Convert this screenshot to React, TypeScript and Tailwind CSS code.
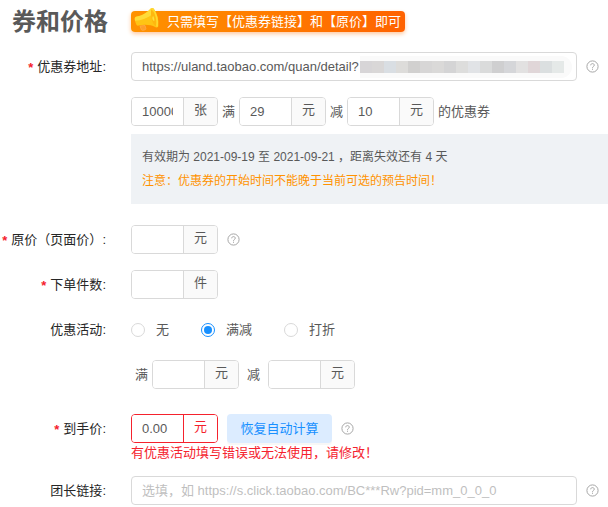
import { useState } from 'react';
import type { ReactNode } from 'react';

type RowProps = {
  label?: string;
  htmlFor?: string;
  required?: boolean;
  className?: string;
  children: ReactNode;
};

const Row = ({ label, htmlFor, required, className = '', children }: RowProps) => (
  <div className={`flex gap-[25px] ${className}`}>
    <div className="flex h-[29px] w-[106px] shrink-0 items-center justify-end whitespace-nowrap text-[#262626]">
      {required && <span className="mr-1 pt-0.5 font-bold text-[#f5222d]" aria-hidden="true">*</span>}
      {label && <label htmlFor={htmlFor}>{label}:</label>}
    </div>
    <div className="min-w-0 flex-1">{children}</div>
  </div>
);

type UnitInputProps = {
  id?: string;
  label: string;
  unit: string;
  defaultValue?: string;
  error?: boolean;
};

const UnitInput = ({ id, label, unit, defaultValue = '', error = false }: UnitInputProps) => {
  const [value, setValue] = useState(defaultValue);

  return (
    <div className={`flex h-[29px] w-[87px] shrink-0 overflow-hidden rounded border ${error ? 'border-[#f5222d]' : 'border-[#d9d9d9]'}`}>
      <input
        id={id}
        aria-label={label}
        className="w-[51px] min-w-0 bg-white px-2.5 outline-none"
        value={value}
        onChange={(e) => setValue(e.target.value)}
      />
      <span
        className={`flex flex-1 items-center justify-center border-l pb-1 ${
          error ? 'border-[#f5222d] bg-white text-[#f5222d]' : 'border-[#d9d9d9] bg-[#fafafa]'
        }`}
      >
        {unit}
      </span>
    </div>
  );
};

const HelpButton = () => (
  <button type="button" aria-label="帮助" className="shrink-0">
    <svg width="13" height="13" viewBox="0 0 13 13" fill="none" stroke="#a6a6a6">
      <circle cx="6.5" cy="6.5" r="5.6" />
      <path d="M4.7 5.3c0-1 .8-1.7 1.8-1.7s1.8.7 1.8 1.6c0 1.2-1.8 1.3-1.8 2.6" />
      <path d="M6.5 8.7v1.1" />
    </svg>
  </button>
);

const Megaphone = () => (
  <svg className="absolute -top-1 left-0.5" width="28" height="26" viewBox="0 0 28 26">
    <path d="M7 19l1.3 3.5c.3.8.9 1 1.7.8l2-.5c.8-.2 1-.8.8-1.5L12 18.5z" fill="#ff9d2a" stroke="#ffab4a" strokeWidth=".8" />
    <path d="M3 9.8C8.5 9 14 6 17.8 1.6c1-1 2.4-.8 3.2.3 3.5 5 5 11 4.300 17-.2 1.300-1.500 1.900-2.700 1.300-5-2.500-11-3-16.800-1.600-1.200.3-2-.1-2.500-1.200-.9-1.800-1.400-3.600-1.500-5.500 0-1.100.3-1.900 1.200-2.100z" fill="#ffc414" />
    <path d="M3 9.8C8.5 9 14 6 17.8 1.6c.6-.6 1.3-.8 2-.6l-.3 6C15 11 8.5 13.5 2 13.8c-.6-2.2-.2-3.8 1-4z" fill="#ffdb38" />
    <path d="M18.5 2.3c3.6 4.6 5.3 10.5 4.7 16.7-2.5-.6-4-4-4.8-8.5-.5-3-.6-6-.1-8.2z" fill="#ffb70f" />
    <path d="M19.8 1.6c3.6 5 5 11.3 4.2 18" fill="none" stroke="#ffd92f" strokeWidth="1.6" />
    <path d="M20.2 9c.9 1.5 1.3 3.3 1.1 5-1.1-.3-1.7-1.3-1.9-2.6-.1-1 .1-2 .8-2.4z" fill="#ffe03d" />
  </svg>
);

const maskTiles = [
  '#d7d5d7', '#d9d7d7', '#d9dee3', '#dddcda', '#d1d0cf', '#d7d6d6',
  '#dad9d8', '#d4d4d5', '#dddddc', '#e1e3e6', '#dadbdb', '#cfcfd0',
  '#d5d6d9', '#e2e1e1', '#e0d6d8', '#dbdfe0', '#e5e9e8',
];

const activities = [
  { value: 'none', label: '无' },
  { value: 'reduce', label: '满减' },
  { value: 'discount', label: '打折' },
];

const App = () => {
  const [url, setUrl] = useState('https://uland.taobao.com/quan/detail?');
  const [activity, setActivity] = useState('reduce');
  const [link, setLink] = useState('');

  return (
    <form className="bg-white pt-[11px] font-['Liberation_Sans','Noto_Sans_CJK_SC',sans-serif] text-[13px] leading-5 text-[#595959]">
      <header className="flex h-[21px] items-center gap-6 pl-3">
        <h1 className="w-[95px] shrink-0 text-2xl font-bold whitespace-nowrap">券和价格</h1>
        <div className="relative flex h-[21px] w-[274px] items-center justify-end rounded bg-linear-to-r from-[#ff9200] to-[#ff6200] pr-1 whitespace-nowrap text-white shadow-[0_2px_4px_#ffc9a0]">
          <Megaphone />
          只需填写【优惠券链接】和【原价】即可
        </div>
      </header>

      <Row label="优惠券地址" htmlFor="coupon-url" required className="mt-5">
        <div className="flex items-center gap-[9px] pr-[9px]">
          <div className="relative min-w-0 flex-1">
            <input
              id="coupon-url"
              className="block h-[29px] w-full rounded border border-[#d9d9d9] bg-white px-2.5 outline-none"
              value={url}
              onChange={(e) => setUrl(e.target.value)}
            />
            <div className="absolute top-1 left-[229px] flex h-[22px] items-center rounded-r-full bg-[#fafafa] pr-2">
              {maskTiles.map((color, i) => (
                <span key={i} className="h-3 w-3" style={{ backgroundColor: color }} />
              ))}
            </div>
          </div>
          <HelpButton />
        </div>
      </Row>

      <Row className="mt-4">
        <div className="flex items-center gap-1">
          <UnitInput label="优惠券数量" unit="张" defaultValue="100000" />
          <span>满</span>
          <UnitInput label="优惠券满额" unit="元" defaultValue="29" />
          <span>减</span>
          <UnitInput label="优惠券减额" unit="元" defaultValue="10" />
          <span>的优惠券</span>
        </div>
        <div className="mt-2 flex h-[70px] flex-col justify-center bg-[#eff2f5] pl-[11px] text-xs leading-6">
          <p>有效期为 2021-09-19 至 2021-09-21 ，距离失效还有 4 天</p>
          <p className="text-[#ff9200]">注意：优惠券的开始时间不能晚于当前可选的预告时间！</p>
        </div>
      </Row>

      <Row label="原价（页面价）" htmlFor="price" required className="mt-[21px]">
        <div className="flex items-center gap-[9px]">
          <UnitInput id="price" label="原价（页面价）" unit="元" />
          <HelpButton />
        </div>
      </Row>

      <Row label="下单件数" htmlFor="count" required className="mt-4">
        <UnitInput id="count" label="下单件数" unit="件" />
      </Row>

      <Row label="优惠活动" className="mt-4">
        <div className="flex h-[29px] items-center gap-8" role="radiogroup" aria-label="优惠活动">
          {activities.map((item) => (
            <label key={item.value} className="flex items-center gap-[11px]">
              <input
                type="radio"
                name="activity"
                className="h-3.5 w-3.5 appearance-none rounded-full border border-[#d9d9d9] bg-white bg-clip-content p-[2px] checked:border-[#1890ff] checked:bg-[#1890ff]"
                checked={activity === item.value}
                onChange={() => setActivity(item.value)}
              />
              {item.label}
            </label>
          ))}
        </div>
      </Row>

      <Row className="mt-4">
        <div className="flex items-center gap-2 pl-1">
          <div className="flex items-center gap-1">
            <span>满</span>
            <UnitInput label="活动满额" unit="元" />
          </div>
          <span>减</span>
          <UnitInput label="活动减额" unit="元" />
        </div>
      </Row>

      <Row label="到手价" htmlFor="final-price" required className="mt-[25px]">
        <div className="flex items-center gap-[9px]">
          <UnitInput id="final-price" label="到手价" unit="元" defaultValue="0.00" error />
          <button type="button" className="h-[29px] w-[105px] rounded bg-[#dcecff] text-[#1890ff] shadow-[0_2px_1px_#f7f7f7]">
            恢复自动计算
          </button>
          <HelpButton />
        </div>
        <p className="text-[#f5222d]">有优惠活动填写错误或无法使用，请修改！</p>
      </Row>

      <Row label="团长链接" htmlFor="leader-link" className="mt-[13px]">
        <div className="flex items-center gap-[9px] pr-[9px]">
          <input
            id="leader-link"
            className="h-[29px] min-w-0 flex-1 rounded border border-[#d9d9d9] bg-white px-2.5 outline-none placeholder:text-[#bfbfbf]"
            placeholder="选填，如 https://s.click.taobao.com/BC***Rw?pid=mm_0_0_0"
            value={link}
            onChange={(e) => setLink(e.target.value)}
          />
          <HelpButton />
        </div>
      </Row>
    </form>
  );
};

export default App;
